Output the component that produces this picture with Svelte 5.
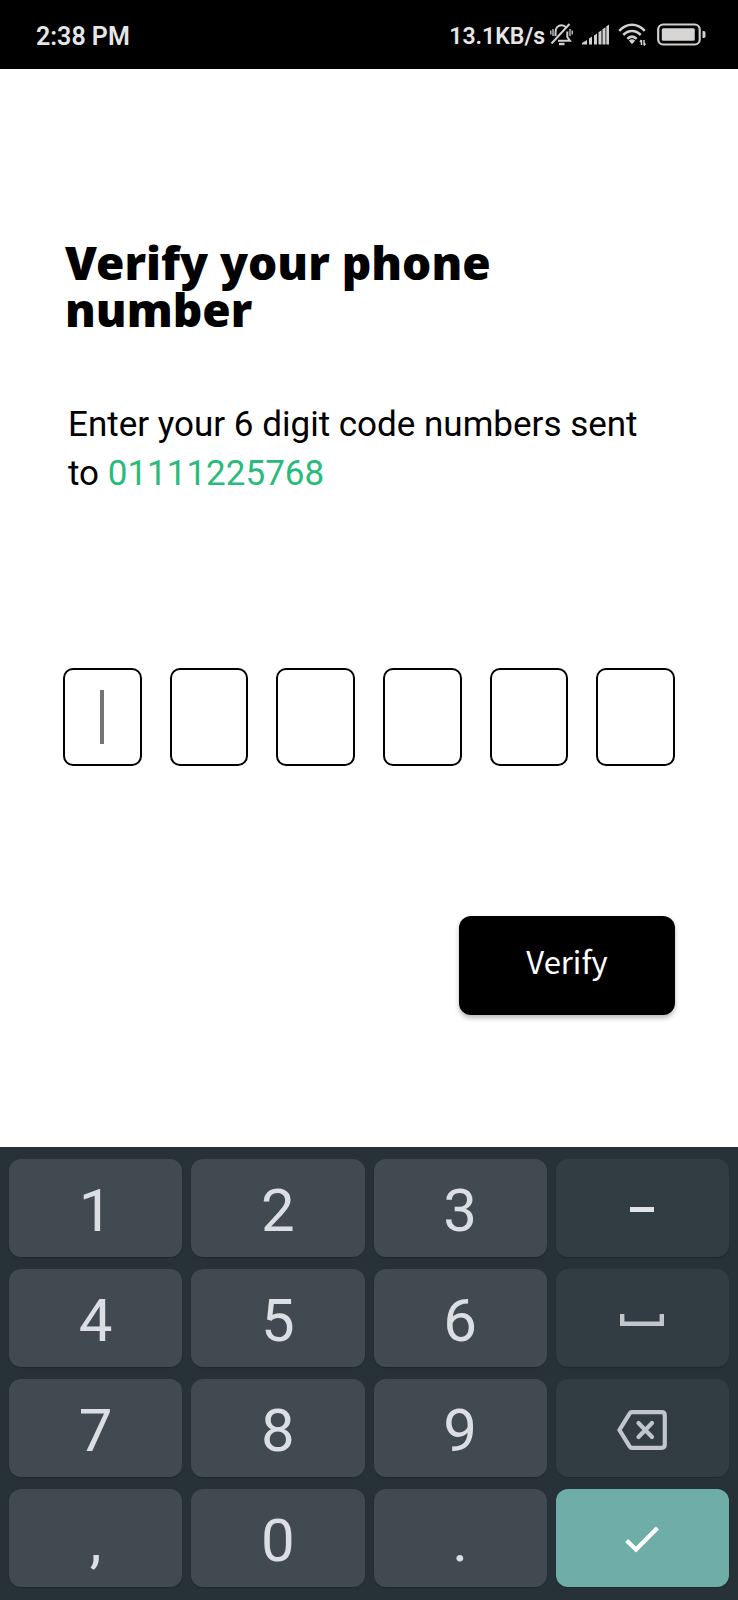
<script>
  const cells = [0, 1, 2, 3, 4, 5];
  let code = $state(['', '', '', '', '', '']);
  let active = $state(0);

  const keys = [
    { label: '1' }, { label: '2' }, { label: '3' }, { icon: 'minus', name: 'Minus' },
    { label: '4' }, { label: '5' }, { label: '6' }, { icon: 'space', name: 'Space' },
    { label: '7' }, { label: '8' }, { label: '9' }, { icon: 'back', name: 'Backspace' },
    { label: ',' }, { label: '0' }, { label: '.' }, { icon: 'done', name: 'Done' }
  ];

  function press(key) {
    if (key.icon === 'back') {
      if (!code[active] && active > 0) active -= 1;
      code[active] = '';
    } else if (key.label && /\d/.test(key.label)) {
      code[active] = key.label;
      if (active < 5) active += 1;
    }
  }
</script>

<div class="screen">
  <header class="status">
    <span class="time">2:38 PM</span>
    <div class="indicators">
      <span class="speed">13.1KB/s</span>
      <svg width="23" height="23" viewBox="0 0 23 23" fill="none" stroke="#d0d0d0" stroke-width="2" aria-hidden="true">
        <path d="M5.500 13V9.500C5.500 5 8 2.200 11.500 2.200c2 0 3.600 .8 4.700 2.300M17.300 8.500V14l2.700 3.800H8" />
        <path d="M1.500 20.500 19.500 1" />
        <path d="M9 21h5.500" stroke-width="2.400" />
        <path d="M3 6v7M.8 7.500v4M20 6v7M22.200 7.500v4" stroke-width="1.300" />
      </svg>
      <svg width="27" height="21" viewBox="0 0 27 21" fill="#d0d0d0" aria-hidden="true">
        <path d="M0 20.500v-1.500L5 16v4.500zM7 14.500l3-2v8H7zM12 11.500l3-2v11h-3zM16.500 8.300l3-2v14.200h-3zM20.500 5.300l3-2v17.200h-3zM24.300 2.500l2.700-2v20h-2.700z" />
      </svg>
      <svg width="30" height="23" viewBox="0 0 30 23" fill="none" stroke="#d0d0d0" stroke-width="2.600" aria-hidden="true">
        <path d="M1.200 7.800C8.500-.3 19.500-.3 26.800 7.800M5.300 12C10.300 6.600 17.700 6.600 22.700 12M9.300 15.800C12.100 12.900 15.900 12.900 18.700 15.800" />
        <path d="M10.800 17.500q3.200-2.400 6.400 0L14 21.300z" fill="#d0d0d0" stroke="none" />
        <path d="M23.500 17v5M26 17v5M22 19l1.500-2M27.500 20.500 26 22.500" stroke-width="1.500" />
      </svg>
      <svg width="49" height="23" viewBox="0 0 49 23" aria-hidden="true">
        <rect x="1.200" y="1.500" width="41.500" height="20" rx="5" fill="none" stroke="#d0d0d0" stroke-width="2.200" />
        <rect x="4.800" y="5.200" width="33" height="12.600" rx="1.500" fill="#d8d5d5" />
        <path d="M45.500 8h1.200q1.800 0 1.800 1.800v3.400q0 1.800-1.800 1.800h-1.200z" fill="#d0d0d0" />
      </svg>
    </div>
  </header>

  <main>
    <h1>Verify your phone number</h1>
    <p>Enter your 6 digit code numbers sent to <a href="tel:01111225768">01111225768</a></p>
    <div class="code">
      {#each cells as i}
        <label class="cell">
          <input
            type="text"
            inputmode="numeric"
            maxlength="1"
            aria-label={`Digit ${i + 1}`}
            bind:value={code[i]}
            onfocus={() => (active = i)}
          />
          {#if active === i && !code[i]}<span class="caret"></span>{/if}
        </label>
      {/each}
    </div>
    <button class="verify" type="button">Verify</button>
  </main>

  <div class="keyboard">
    {#each keys as key}
      <button
        type="button"
        class="key"
        class:side={key.icon}
        class:done={key.icon === 'done'}
        aria-label={key.name}
        onclick={() => press(key)}
      >
        {#if key.icon === 'minus'}
          <svg width="24" height="5" viewBox="0 0 24 5" aria-hidden="true"><path d="M0 0h24v5H0z" fill="#dfe3e6" /></svg>
        {:else if key.icon === 'space'}
          <svg width="44" height="12" viewBox="0 0 44 12" aria-hidden="true"><path d="M2.200 0v9.700h39.600V0" fill="none" stroke="#c1c6ca" stroke-width="4.400" /></svg>
        {:else if key.icon === 'back'}
          <svg width="50" height="40" viewBox="0 0 50 40" fill="none" stroke="#c1c5ce" stroke-width="4.200" aria-hidden="true">
            <path d="M15 2.200h29.500q3.300 0 3.300 3.300v29q0 3.300-3.300 3.300H15q-1.500 0-2.400-1.500L2.400 20 12.600 3.700Q13.500 2.200 15 2.200z" stroke-linejoin="round" />
            <path d="M21.500 13l13.500 14M35 13l-13.500 14" stroke-linecap="round" />
          </svg>
        {:else if key.icon === 'done'}
          <svg width="34" height="27" viewBox="0 0 34 27" aria-hidden="true"><path d="M1.600 14.500 11 23.500 32.400 2" fill="none" stroke="#fff" stroke-width="4.200" /></svg>
        {:else}
          {key.label}
        {/if}
      </button>
    {/each}
  </div>
</div>

<style>
  :global(body) {
    margin: 0;
    background: #fff;
  }
  .screen {
    min-height: 100vh;
    display: flex;
    flex-direction: column;
    font-family: Roboto, sans-serif;
    color: #000;
  }
  .status {
    box-sizing: border-box;
    height: 69px;
    padding: 0 32px 0 36px;
    display: flex;
    align-items: center;
    justify-content: space-between;
    background: #000;
    color: #e6e6e6;
  }
  .time,
  .speed {
    padding-top: 4px;
    line-height: 28px;
    font-weight: 600;
  }
  .time {
    font-size: 25px;
  }
  .indicators {
    display: flex;
    align-items: center;
    gap: 9px;
  }
  .speed {
    font-size: 23px;
    margin-right: -4px;
  }
  main {
    flex: 1;
    display: flex;
    flex-direction: column;
    padding: 170px 63px 0;
  }
  h1 {
    margin: 0;
    padding: 0 120px 0 2px;
    font-family: "Noto Sans", sans-serif;
    font-size: 46px;
    line-height: 47px;
    font-weight: 900;
  }
  p {
    margin: 67px 0 0;
    padding: 0 4px 0 5px;
    font-size: 35px;
    line-height: 49px;
  }
  a {
    color: #29bb7b;
    text-decoration: none;
  }
  .code {
    margin-top: 170px;
    display: grid;
    grid-template-columns: repeat(6, 1fr);
    gap: 28px;
  }
  .cell {
    position: relative;
    display: block;
  }
  input {
    box-sizing: border-box;
    display: block;
    width: 100%;
    height: 98px;
    border: 2px solid #000;
    border-radius: 10px;
    background: #fff;
    font: 400 44px/52px Roboto, sans-serif;
    text-align: center;
    outline: none;
    padding: 0;
  }
  .caret {
    position: absolute;
    inset: 22px 0;
    margin: 0 auto;
    width: 4px;
    background: #757575;
    pointer-events: none;
  }
  .verify {
    align-self: flex-end;
    margin: 150px 0 131px;
    width: 216px;
    height: 99px;
    padding: 0 0 10px;
    border: 0;
    border-radius: 12px;
    background: #000;
    color: #fff;
    font: 400 31px/40px "Noto Sans CJK SC", sans-serif;
    box-shadow: 0 3px 5px rgba(0, 0, 0, 0.28);
  }
  .keyboard {
    display: grid;
    grid-template-columns: repeat(4, 1fr);
    gap: 12px 9px;
    padding: 12px 9px 13px;
    background: #263138;
  }
  .key {
    display: flex;
    align-items: center;
    justify-content: center;
    height: 98px;
    border: 0;
    border-radius: 12px;
    padding: 5px 0 0;
    background: #424a51;
    color: #dbdfe3;
    font: 400 60px/70px Roboto, sans-serif;
    box-shadow: 0 1px 1px #1f282e;
  }
  .side {
    padding-top: 3px;
    background: #313c43;
  }
  .done {
    background: #6fada9;
  }
</style>
